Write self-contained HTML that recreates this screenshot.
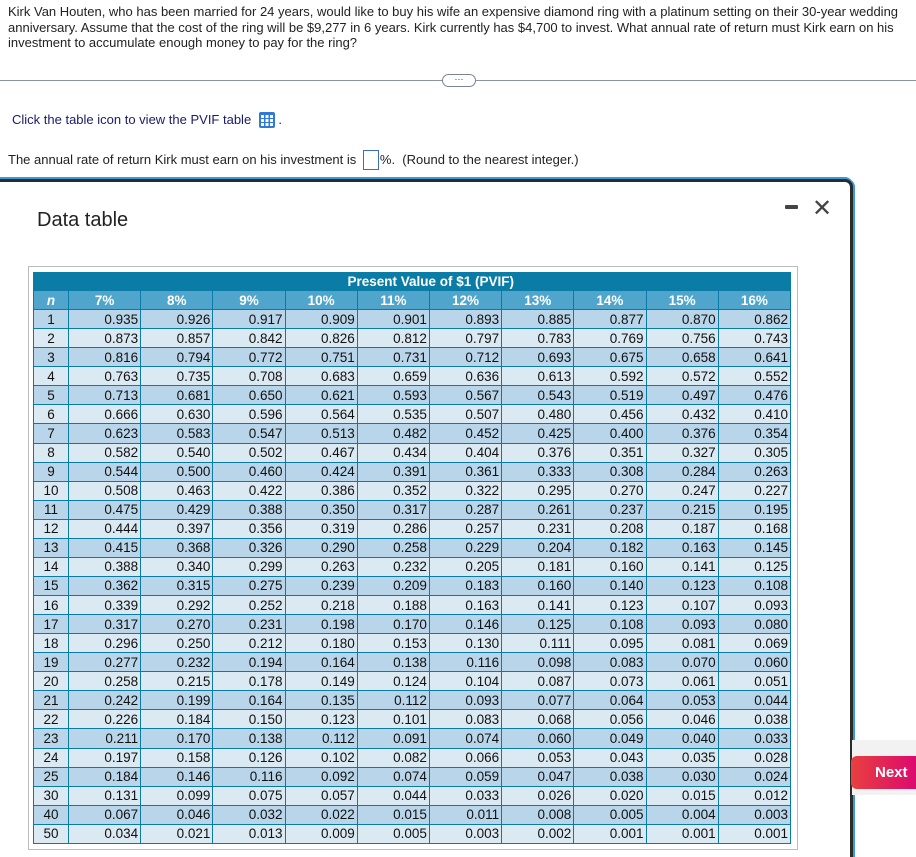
<!DOCTYPE html>
<html><head><meta charset="utf-8"><style>
html,body{margin:0;width:916px;height:857px;overflow:hidden}
body{position:relative;background:#fff;font-family:"Liberation Sans",Arial,sans-serif;color:#222}
.q{position:absolute;left:8px;top:4px;width:905px;font-size:13px;line-height:15.5px}
.hr{position:absolute;left:0;top:80px;width:916px;border-top:1px solid #8a93a3}
.dots{position:absolute;left:442px;top:74px;width:32px;height:11px;border:1px solid #7a8494;border-radius:7px;background:#fff;font-size:9px;line-height:8px;text-align:center;color:#334}
.l1{position:absolute;left:12px;top:112px;font-size:13px;color:#1a1a6a}
.ico{display:inline-block;width:16px;height:16px;vertical-align:-4px;margin-left:4px}
.l2{position:absolute;left:8px;top:150px;font-size:13px}
.box{display:inline-block;width:14px;height:18px;border:1px solid #3a6fc0;vertical-align:-6px;margin:0 1px 0 3px}
.modal{position:absolute;left:-10px;top:179px;width:857px;height:675px;border:3px solid #2b2b2b;border-bottom:none;border-radius:8px 8px 0 0;box-shadow:0 -2px 0 0 #3a9ad8,2px 0 0 0 #3a9ad8;background:#fff}
.title{position:absolute;left:37px;top:209px;font-size:20px;color:#222}
.min{position:absolute;left:785px;top:205px;width:13px;height:4px;background:#444;border-radius:1px}
.x{position:absolute;left:812px;top:194px;font-size:24px;color:#444;font-weight:300}
.wrap{position:absolute;left:28px;top:266px;width:768px;height:582px;border:1px solid #bbb}
table{position:absolute;left:33px;top:272px;border-collapse:collapse;font-size:13.5px;width:758px;table-layout:fixed;color:#111}
td,th{padding:0 2px;height:18.07px;line-height:17px;border:1px solid #0a7aa6;text-align:right}
th{background:#4fa5cb;color:#fff;font-weight:bold;text-align:center;font-size:13.5px}
th.t{background:#0b7ca6;border-color:#0b7ca6;height:17px}
td:first-child{text-align:center}
tr:nth-child(odd) td{background:#b9d5ea}
tr:nth-child(even) td{background:#dbe9f2}
.strip{position:absolute;left:852px;top:740px;width:64px;height:55px;background:#f2f2f2}
.next{position:absolute;left:851px;top:756px;width:65px;height:33px;border-radius:6px 0 0 6px;background:linear-gradient(90deg,#e8403f,#dc0a6e);color:#fff;font-weight:bold;font-size:15px;line-height:33px;padding-left:24px;box-sizing:border-box}
</style></head><body>
<div class="q">Kirk Van Houten, who has been married for 24 years, would like to buy his wife an expensive diamond ring with a platinum setting on their 30-year wedding anniversary. Assume that the cost of the ring will be $9,277 in 6 years. Kirk currently has $4,700 to invest. What annual rate of return must Kirk earn on his investment to accumulate enough money to pay for the ring?</div>
<div class="hr"></div><div class="dots">···</div>
<div class="l1">Click the table icon to view the PVIF table <svg class="ico" viewBox="0 0 16 16"><rect x="0" y="0" width="16" height="16" rx="2" fill="#2f7ad6"/><g fill="#fff"><rect x="2" y="3" width="3" height="3"/><rect x="6.5" y="3" width="3" height="3"/><rect x="11" y="3" width="3" height="3"/><rect x="2" y="7" width="3" height="3"/><rect x="6.5" y="7" width="3" height="3"/><rect x="11" y="7" width="3" height="3"/><rect x="2" y="11" width="3" height="3"/><rect x="6.5" y="11" width="3" height="3"/><rect x="11" y="11" width="3" height="3"/></g></svg> .</div>
<div class="l2">The annual rate of return Kirk must earn on his investment is <span class="box"></span>%.&nbsp; (Round to the nearest integer.)</div>
<div class="modal"></div>
<div class="title">Data table</div><div class="min"></div><div class="x">✕</div>
<div class="wrap"></div>
<table>
<colgroup><col style="width:35px"><col span="10"></colgroup>
<tr><th class="t" colspan="11">&nbsp;&nbsp;&nbsp;&nbsp;&nbsp;&nbsp;&nbsp;&nbsp;&nbsp;&nbsp;Present Value of $1 (PVIF)</th></tr>
<tr><th><i>n</i></th><th>7%</th><th>8%</th><th>9%</th><th>10%</th><th>11%</th><th>12%</th><th>13%</th><th>14%</th><th>15%</th><th>16%</th></tr>
<tr><td>1</td><td>0.935</td><td>0.926</td><td>0.917</td><td>0.909</td><td>0.901</td><td>0.893</td><td>0.885</td><td>0.877</td><td>0.870</td><td>0.862</td></tr>
<tr><td>2</td><td>0.873</td><td>0.857</td><td>0.842</td><td>0.826</td><td>0.812</td><td>0.797</td><td>0.783</td><td>0.769</td><td>0.756</td><td>0.743</td></tr>
<tr><td>3</td><td>0.816</td><td>0.794</td><td>0.772</td><td>0.751</td><td>0.731</td><td>0.712</td><td>0.693</td><td>0.675</td><td>0.658</td><td>0.641</td></tr>
<tr><td>4</td><td>0.763</td><td>0.735</td><td>0.708</td><td>0.683</td><td>0.659</td><td>0.636</td><td>0.613</td><td>0.592</td><td>0.572</td><td>0.552</td></tr>
<tr><td>5</td><td>0.713</td><td>0.681</td><td>0.650</td><td>0.621</td><td>0.593</td><td>0.567</td><td>0.543</td><td>0.519</td><td>0.497</td><td>0.476</td></tr>
<tr><td>6</td><td>0.666</td><td>0.630</td><td>0.596</td><td>0.564</td><td>0.535</td><td>0.507</td><td>0.480</td><td>0.456</td><td>0.432</td><td>0.410</td></tr>
<tr><td>7</td><td>0.623</td><td>0.583</td><td>0.547</td><td>0.513</td><td>0.482</td><td>0.452</td><td>0.425</td><td>0.400</td><td>0.376</td><td>0.354</td></tr>
<tr><td>8</td><td>0.582</td><td>0.540</td><td>0.502</td><td>0.467</td><td>0.434</td><td>0.404</td><td>0.376</td><td>0.351</td><td>0.327</td><td>0.305</td></tr>
<tr><td>9</td><td>0.544</td><td>0.500</td><td>0.460</td><td>0.424</td><td>0.391</td><td>0.361</td><td>0.333</td><td>0.308</td><td>0.284</td><td>0.263</td></tr>
<tr><td>10</td><td>0.508</td><td>0.463</td><td>0.422</td><td>0.386</td><td>0.352</td><td>0.322</td><td>0.295</td><td>0.270</td><td>0.247</td><td>0.227</td></tr>
<tr><td>11</td><td>0.475</td><td>0.429</td><td>0.388</td><td>0.350</td><td>0.317</td><td>0.287</td><td>0.261</td><td>0.237</td><td>0.215</td><td>0.195</td></tr>
<tr><td>12</td><td>0.444</td><td>0.397</td><td>0.356</td><td>0.319</td><td>0.286</td><td>0.257</td><td>0.231</td><td>0.208</td><td>0.187</td><td>0.168</td></tr>
<tr><td>13</td><td>0.415</td><td>0.368</td><td>0.326</td><td>0.290</td><td>0.258</td><td>0.229</td><td>0.204</td><td>0.182</td><td>0.163</td><td>0.145</td></tr>
<tr><td>14</td><td>0.388</td><td>0.340</td><td>0.299</td><td>0.263</td><td>0.232</td><td>0.205</td><td>0.181</td><td>0.160</td><td>0.141</td><td>0.125</td></tr>
<tr><td>15</td><td>0.362</td><td>0.315</td><td>0.275</td><td>0.239</td><td>0.209</td><td>0.183</td><td>0.160</td><td>0.140</td><td>0.123</td><td>0.108</td></tr>
<tr><td>16</td><td>0.339</td><td>0.292</td><td>0.252</td><td>0.218</td><td>0.188</td><td>0.163</td><td>0.141</td><td>0.123</td><td>0.107</td><td>0.093</td></tr>
<tr><td>17</td><td>0.317</td><td>0.270</td><td>0.231</td><td>0.198</td><td>0.170</td><td>0.146</td><td>0.125</td><td>0.108</td><td>0.093</td><td>0.080</td></tr>
<tr><td>18</td><td>0.296</td><td>0.250</td><td>0.212</td><td>0.180</td><td>0.153</td><td>0.130</td><td>0.111</td><td>0.095</td><td>0.081</td><td>0.069</td></tr>
<tr><td>19</td><td>0.277</td><td>0.232</td><td>0.194</td><td>0.164</td><td>0.138</td><td>0.116</td><td>0.098</td><td>0.083</td><td>0.070</td><td>0.060</td></tr>
<tr><td>20</td><td>0.258</td><td>0.215</td><td>0.178</td><td>0.149</td><td>0.124</td><td>0.104</td><td>0.087</td><td>0.073</td><td>0.061</td><td>0.051</td></tr>
<tr><td>21</td><td>0.242</td><td>0.199</td><td>0.164</td><td>0.135</td><td>0.112</td><td>0.093</td><td>0.077</td><td>0.064</td><td>0.053</td><td>0.044</td></tr>
<tr><td>22</td><td>0.226</td><td>0.184</td><td>0.150</td><td>0.123</td><td>0.101</td><td>0.083</td><td>0.068</td><td>0.056</td><td>0.046</td><td>0.038</td></tr>
<tr><td>23</td><td>0.211</td><td>0.170</td><td>0.138</td><td>0.112</td><td>0.091</td><td>0.074</td><td>0.060</td><td>0.049</td><td>0.040</td><td>0.033</td></tr>
<tr><td>24</td><td>0.197</td><td>0.158</td><td>0.126</td><td>0.102</td><td>0.082</td><td>0.066</td><td>0.053</td><td>0.043</td><td>0.035</td><td>0.028</td></tr>
<tr><td>25</td><td>0.184</td><td>0.146</td><td>0.116</td><td>0.092</td><td>0.074</td><td>0.059</td><td>0.047</td><td>0.038</td><td>0.030</td><td>0.024</td></tr>
<tr><td>30</td><td>0.131</td><td>0.099</td><td>0.075</td><td>0.057</td><td>0.044</td><td>0.033</td><td>0.026</td><td>0.020</td><td>0.015</td><td>0.012</td></tr>
<tr><td>40</td><td>0.067</td><td>0.046</td><td>0.032</td><td>0.022</td><td>0.015</td><td>0.011</td><td>0.008</td><td>0.005</td><td>0.004</td><td>0.003</td></tr>
<tr><td>50</td><td>0.034</td><td>0.021</td><td>0.013</td><td>0.009</td><td>0.005</td><td>0.003</td><td>0.002</td><td>0.001</td><td>0.001</td><td>0.001</td></tr>
</table>
<div class="strip"></div><div class="next">Next</div>
</body></html>
